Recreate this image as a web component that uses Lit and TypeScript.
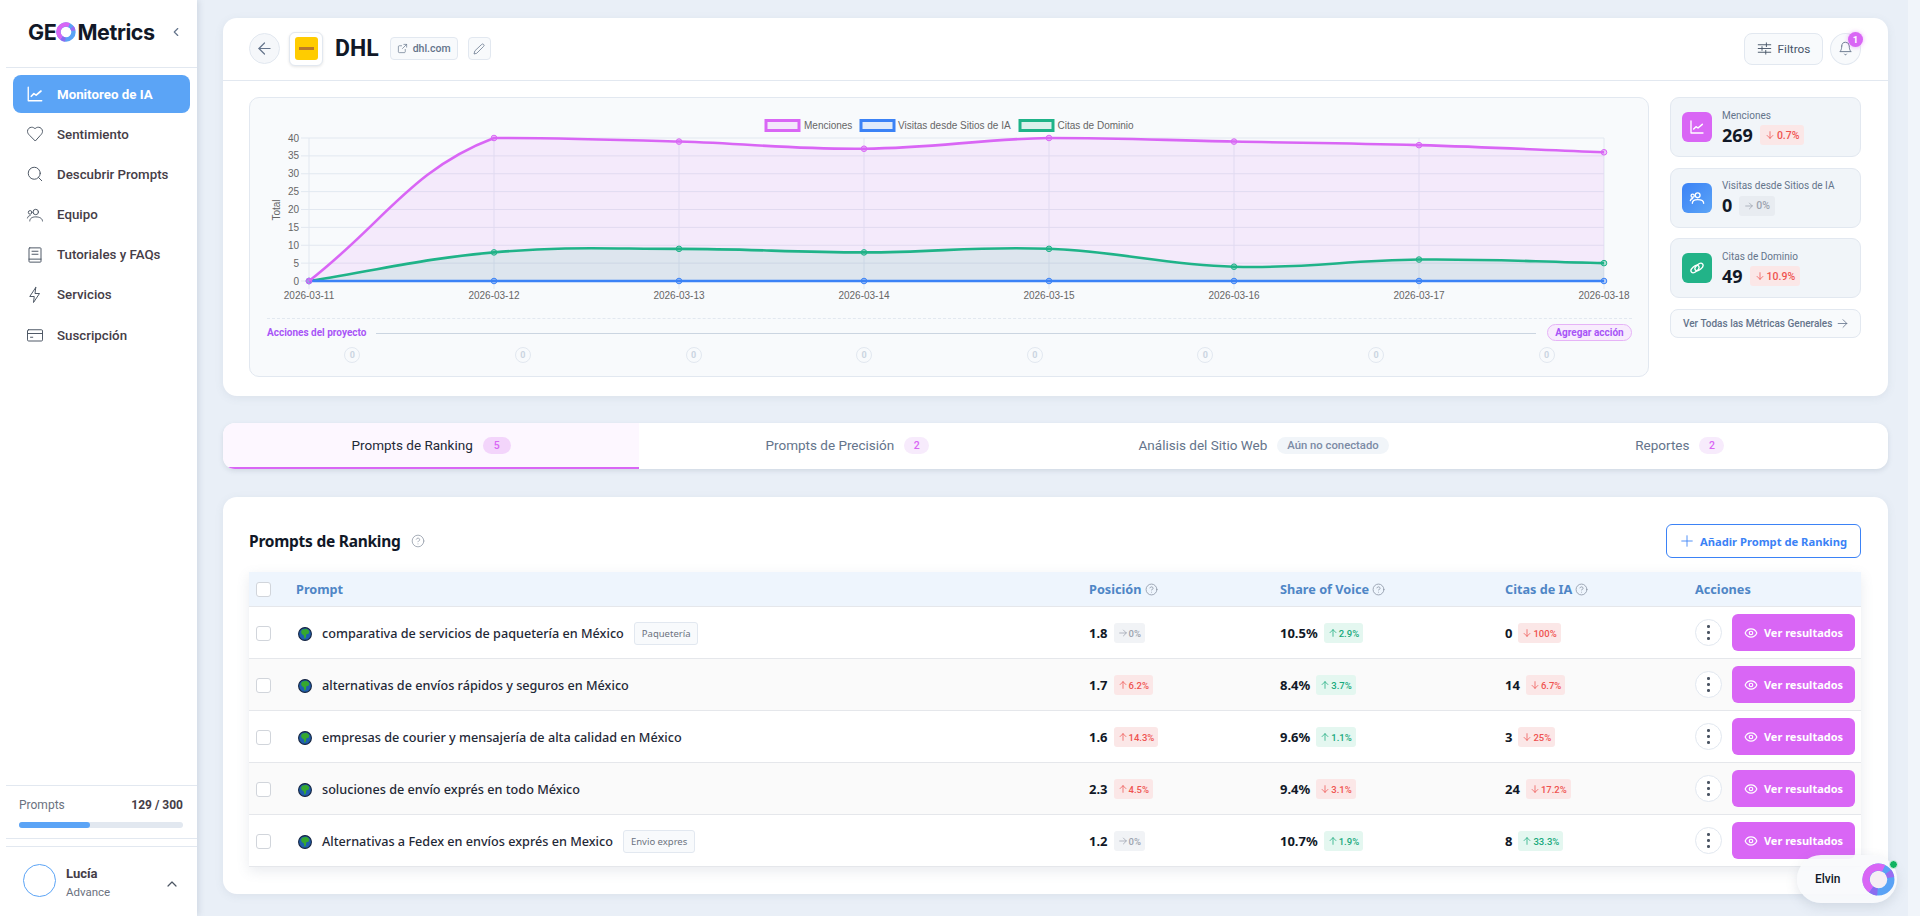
import { LitElement, html, css, svg } from "lit";
import { customElement } from "lit/decorators.js";

const ic = (body: any, size = 16, sw = 1.5) => html`<svg class="ic" width=${size} height=${size} viewBox="0 0 24 24" fill="none" stroke="currentColor" stroke-width=${sw} stroke-linecap="round" stroke-linejoin="round">${body}</svg>`;

const I = {
  chart: svg`<path d="M3 3v18h18"/><path d="M7 15l3.500-3.500 3 2L20 8" stroke-width="2.200"/>`,
  heart: svg`<path d="M19 14c1.490-1.460 3-3.210 3-5.500A5.500 5.500 0 0 0 16.500 3c-1.760 0-3 .5-4.500 2-1.500-1.500-2.740-2-4.500-2A5.500 5.500 0 0 0 2 8.500c0 2.300 1.500 4.050 3 5.500l7 7Z"/>`,
  search: svg`<circle cx="11" cy="11" r="8"/><path d="m21 21-4.300-4.300"/>`,
  users: svg`<circle cx="13" cy="8" r="3.600"/><path d="M5 20c0-3.500 3-5.500 8-5.500s9 2 9 5.500"/><circle cx="5.500" cy="8.500" r="2.400"/><path d="M2 16c.5-2 1.500-3 3.500-3.300"/>`,
  book: svg`<rect x="4" y="2.500" width="16" height="19" rx="1"/><path d="M8 7h8M8 11h8M4 17.500h16"/>`,
  zap: svg`<path d="M13 2 5 14h6l-1 8 8-12h-6l1-8z"/>`,
  card: svg`<rect x="2" y="5" width="20" height="15" rx="1.500"/><path d="M2 10h20M6 15h3"/>`,
  back: svg`<path d="m12 19-7-7 7-7"/><path d="M19 12H5"/>`,
  ext: svg`<path d="M15 3h6v6"/><path d="M12 12 21 3"/><path d="M18 14v5a2 2 0 0 1-2 2H5a2 2 0 0 1-2-2V8a2 2 0 0 1 2-2h5"/>`,
  pencil: svg`<path d="M17 3a2.850 2.830 0 1 1 4 4L7.500 20.500 2 22l1.500-5.500Z"/>`,
  sliders: svg`<path d="M2 6h20M2 12h20M2 18h20"/><path d="M15 3v6M8 9v6M14 15v6"/>`,
  bell: svg`<path d="M6 8a6 6 0 0 1 12 0c0 7 3 9 3 9H3s3-2 3-9"/><path d="M10.300 21a1.940 1.940 0 0 0 3.400 0"/>`,
  help: svg`<circle cx="12" cy="12" r="10"/><path d="M9.090 9a3 3 0 0 1 5.830 1c0 2-3 3-3 3"/><path d="M12 17h.01"/>`,
  eye: svg`<path d="M2 12s3-7 10-7 10 7 10 7-3 7-10 7-10-7-10-7Z"/><circle cx="12" cy="12" r="3"/>`,
  plus: svg`<path d="M12 3v18M3 12h18"/>`,
  right: svg`<path d="M4 12h16"/><path d="m13 5 7 7-7 7"/>`,
  up: svg`<path d="M12 20V4"/><path d="m5 11 7-7 7 7"/>`,
  down: svg`<path d="M12 4v16"/><path d="m5 13 7 7 7-7"/>`,
  link: svg`<ellipse cx="9" cy="13.500" rx="7" ry="4" transform="rotate(-40 9 13.500)"/><ellipse cx="15" cy="10.500" rx="7" ry="4" transform="rotate(-40 15 10.500)"/>`,
};

type Kind = "up" | "down" | "flat";
interface Tr { k: Kind; c: "red" | "green" | "gray"; t: string; }
const T = (k: Kind, c: Tr["c"], t: string): Tr => ({ k, c, t });

const ROWS = [
  { p: "comparativa de servicios de paquetería en México", tag: "Paquetería", pos: "1.8", pt: T("flat", "gray", "0%"), sov: "10.5%", st: T("up", "green", "2.9%"), cit: "0", ct: T("down", "red", "100%") },
  { p: "alternativas de envíos rápidos y seguros en México", tag: "", pos: "1.7", pt: T("up", "red", "6.2%"), sov: "8.4%", st: T("up", "green", "3.7%"), cit: "14", ct: T("down", "red", "6.7%") },
  { p: "empresas de courier y mensajería de alta calidad en México", tag: "", pos: "1.6", pt: T("up", "red", "14.3%"), sov: "9.6%", st: T("up", "green", "1.1%"), cit: "3", ct: T("down", "red", "25%") },
  { p: "soluciones de envío exprés en todo México", tag: "", pos: "2.3", pt: T("up", "red", "4.5%"), sov: "9.4%", st: T("down", "red", "3.1%"), cit: "24", ct: T("down", "red", "17.2%") },
  { p: "Alternativas a Fedex en envíos exprés en Mexico", tag: "Envio expres", pos: "1.2", pt: T("flat", "gray", "0%"), sov: "10.7%", st: T("up", "green", "1.9%"), cit: "8", ct: T("up", "green", "33.3%") },
];

const NAV: [string, any, number][] = [
  ["Monitoreo de IA", I.chart, 18], ["Sentimiento", I.heart, 18], ["Descubrir Prompts", I.search, 18], ["Equipo", I.users, 18],
  ["Tutoriales y FAQs", I.book, 18], ["Servicios", I.zap, 18], ["Suscripción", I.card, 18],
];

const DATES = ["2026-03-11", "2026-03-12", "2026-03-13", "2026-03-14", "2026-03-15", "2026-03-16", "2026-03-17", "2026-03-18"];
const X0 = 59, X1 = 1354, Y40 = 40, Y0 = 183;
const px = (i: number) => X0 + (i * (X1 - X0)) / 7;
const py = (v: number) => Y0 - (v * (Y0 - Y40)) / 40;

function spline(vals: number[]) {
  const pts = vals.map((v, i) => ({ x: px(i), y: py(v) }));
  const t = 0.4;
  const clampY = (y: number) => Math.max(Y40, Math.min(Y0, y));
  const ctrl = pts.map((p, i) => {
    const a = pts[i - 1] ?? p, b = pts[i + 1] ?? p;
    const d1 = Math.hypot(p.x - a.x, p.y - a.y), d2 = Math.hypot(b.x - p.x, b.y - p.y);
    const s = d1 + d2 || 1;
    return {
      px: p.x - (t * d1 / s) * (b.x - a.x), py: clampY(p.y - (t * d1 / s) * (b.y - a.y)),
      nx: p.x + (t * d2 / s) * (b.x - a.x), ny: clampY(p.y + (t * d2 / s) * (b.y - a.y)),
    };
  });
  let d = `M${pts[0].x} ${pts[0].y}`;
  for (let i = 1; i < pts.length; i++) {
    d += `C${ctrl[i - 1].nx} ${ctrl[i - 1].ny} ${ctrl[i].px} ${ctrl[i].py} ${pts[i].x} ${pts[i].y}`;
  }
  return { d, pts };
}

const SERIES = [
  { c: "#1fb388", f: "rgba(16,185,129,.1)", v: [0, 8, 9, 8, 9, 4, 6, 5] },
  { c: "#3b82f6", f: "rgba(59,130,246,.1)", v: [0, 0, 0, 0, 0, 0, 0, 0] },
  { c: "#d966f5", f: "rgba(217,102,245,.1)", v: [0, 40, 39, 37, 40, 39, 38, 36] },
];

function chart() {
  const grid = [0, 1, 2, 3, 4, 5, 6, 7, 8];
  return html`<svg class="chart" width="1398" height="215" viewBox="0 0 1398 215">
    ${grid.map((g) => { const y = py(g * 5); return svg`<line x1="51" x2=${X1} y1=${y} y2=${y} stroke="#e2e8f0"/>
      <text x="49" y=${y + 3.500} text-anchor="end" class="tk">${g * 5}</text>`; })}
    ${DATES.map((d, i) => svg`<line x1=${px(i)} x2=${px(i)} y1=${Y40} y2=${Y0 + 8} stroke="#e2e8f0"/>
      <text x=${px(i)} y="201" text-anchor="middle" class="tk">${d}</text>`)}
    <text class="tk" text-anchor="middle" transform="translate(30 112) rotate(-90)">Total</text>
    ${[...SERIES].reverse().map((s) => { const { d } = spline(s.v); return svg`<path d=${`${d}L${X1} ${Y0}L${X0} ${Y0}Z`} fill=${s.f}/>`; })}
    ${SERIES.map((s) => {
      const { d, pts } = spline(s.v);
      return svg`<path d=${d} fill="none" stroke=${s.c} stroke-width="2.600"/>
        ${pts.map((p) => svg`<circle cx=${p.x} cy=${p.y} r="2.800" fill=${s.c} fill-opacity=".35" stroke=${s.c}/>`)}`;
    })}
    <g>
      <rect x="516" y="22.500" width="33" height="10" fill="rgba(217,102,245,.12)" stroke="#d966f5" stroke-width="3"/>
      <text x="554" y="31" class="tk">Menciones</text>
      <rect x="611" y="22.500" width="33" height="10" fill="rgba(59,130,246,.12)" stroke="#3b82f6" stroke-width="3"/>
      <text x="648" y="31" class="tk">Visitas desde Sitios de IA</text>
      <rect x="770" y="22.500" width="33" height="10" fill="rgba(16,185,129,.12)" stroke="#1fb388" stroke-width="3"/>
      <text x="807.500" y="31" class="tk">Citas de Dominio</text>
    </g>
  </svg>`;
}

const ring = (size: number, core = "none") => html`<svg width=${size} height=${size} viewBox="0 0 32 32" fill="none" stroke-width="7">
  <circle cx="16" cy="16" r="9" fill=${core} stroke="none"/>
  <circle cx="16" cy="16" r="12" stroke="#5aa2f5"/>
  <path d="M9 25.800A12 12 0 0 1 21 5.100" stroke="#d966f5"/>
  <path d="M25.500 8.600A12 12 0 0 1 27.800 14" stroke="#9a6cf2"/>
  <path d="M9 25.800A12 12 0 0 0 15 28" stroke="#8b6cf0"/>
</svg>`;

const globe = html`<svg class="globe" width="14" height="14" viewBox="0 0 14 14">
  <circle cx="7" cy="7" r="6.400" fill="#1f5fae" stroke="#14233f" stroke-width="1.100"/>
  <path d="M4 2.800 8.500 1.800 11.300 4 10.600 6.800 8.300 7.200 8 10.300 6.500 12 5.900 8.500 3.800 7 3 5Z" fill="#35a82f"/>
</svg>`;

const trend = (t: Tr) => html`<span class="trend ${t.c}">${ic(t.k === "up" ? I.up : t.k === "down" ? I.down : I.right, 10, 1.800)}${t.t}</span>`;

@customElement("app-root")
export class AppRoot extends LitElement {
  static styles = css`
    :host { display: block; position: relative; width: 1920px; height: 916px; overflow: hidden; font-family: "Noto Sans", sans-serif; color: #111827; background: #e9eff7; }
    * { box-sizing: border-box; }
    .ic { display: block; flex: none; }
    .page { display: flex; height: 916px; }

    .side { width: 197px; flex: none; background: #fff; box-shadow: 2px 0 6px rgba(100,116,139,.18); display: flex; flex-direction: column; font-family: Roboto, sans-serif; position: relative; }
    .brand { height: 68px; margin-left: 6px; padding: 0 14px 4px 22px; display: flex; align-items: center; justify-content: space-between; border-bottom: 1px solid #e2e8f0; }
    .logo { display: flex; align-items: center; font: 700 21.500px Inter, sans-serif; letter-spacing: -.4px; color: #111827; }
    .logo svg { margin: 0 1px 0 0; }
    .chev { color: #64748b; }
    .nav { padding: 7px 7px 0 13px; display: flex; flex-direction: column; gap: 2.200px; }
    .nav a { height: 38px; border-radius: 8px; display: flex; align-items: center; gap: 13px; padding-left: 13px; font-size: 13.300px; font-weight: 500; color: #453d47; }
    .nav a .ic { stroke-width: 1.300; color: #4b5563; }
    .nav a.on { background: #5ba4f6; color: #fff; font-weight: 700; }
    .nav a.on .ic { color: #fff; stroke-width: 1.800; }
    .usage { margin: auto 0 0 6px; border-top: 1px solid #e2e8f0; border-bottom: 1px solid #e2e8f0; height: 54px; padding: 12px 14px 0 13px; }
    .usage .l { display: flex; justify-content: space-between; font-size: 12px; color: #6b7280; line-height: 15px; }
    .usage b { color: #453d47; font-weight: 700; font-size: 12px; }
    .bar { height: 6px; margin-top: 9px; background: #e2e8f0; border-radius: 3px; }
    .bar i { display: block; height: 6px; width: 43%; background: #5ba4f6; border-radius: 3px; }
    .user { margin: 7px 0 0 6px; border-top: 1px solid #e2e8f0; height: 70px; display: flex; align-items: center; padding: 0 17px 2px 17px; gap: 10px; }
    .av { width: 33px; height: 33px; border: 1px solid #5ba4f6; border-radius: 50%; }
    .un { flex: 1; margin-top: 5px; }
    .un b { display: block; font-size: 13px; font-weight: 700; color: #453d47; line-height: 17px; }
    .un span { display: block; font-size: 11.500px; color: #6b7280; line-height: 17px; margin-top: 2px; }
    .user > .ic { margin-top: 6px; color: #4b5563; }

    .main { flex: 1; padding: 18px 20px 0 26px; display: flex; flex-direction: column; }
    .sb { width: 12px; flex: none; background: #f1f5fa; }
    .card { background: #fff; border-radius: 14px; box-shadow: 0 2px 8px rgba(100,116,139,.1); }

    .head { height: 63px; border-bottom: 1px solid #e2e8f0; padding: 0 27px 1px 26px; display: flex; align-items: center; }
    .round { width: 31px; height: 31px; border-radius: 50%; border: 1px solid #e2e8f0; background: #f5f7fa; color: #64748b; display: flex; align-items: center; justify-content: center; flex: none; }
    .lg { width: 34px; height: 34px; margin-left: 9px; border: 1px solid #e2e8f0; border-radius: 6px; background: #fff; box-shadow: 0 1px 3px rgba(0,0,0,.1); display: flex; align-items: center; justify-content: center; }
    .lg i { width: 23px; height: 23px; border-radius: 3px; background: #ffcc00; display: flex; align-items: center; justify-content: center; }
    .lg i::after { content: ""; width: 15px; height: 2.500px; background: #b9782a; }
    h1 { margin: 0 0 0 12px; font: 700 23px Roboto, sans-serif; color: #111827; }
    .site { margin-left: 11px; height: 23px; width: 68px; border: 1px solid #e2e8f0; border-radius: 4px; background: #f8fafc; display: flex; align-items: center; justify-content: center; gap: 5px; font: 500 10.500px Roboto, sans-serif; color: #64748b; }
    .edit { margin-left: 10px; width: 23px; height: 23px; border: 1px solid #e2e8f0; border-radius: 4px; background: #f8fafc; color: #64748b; display: flex; align-items: center; justify-content: center; }
    .grow { flex: 1; }
    .filt { width: 79px; height: 32px; border: 1px solid #e2e8f0; border-radius: 8px; background: #f8fafc; color: #475569; display: flex; align-items: center; justify-content: center; gap: 6px; font: 400 11.800px Roboto, sans-serif; }
    .bell { margin-left: 7px; position: relative; width: 31px; height: 32px; background: #f8fafc; }
    .dot { position: absolute; right: -3px; top: -2px; width: 15px; height: 15px; border-radius: 50%; background: #d966f5; color: #fff; font: 700 9.500px/15px Roboto, sans-serif; text-align: center; box-shadow: 0 0 4px rgba(217,102,245,.5); }
    .body { display: flex; gap: 21px; padding: 16px 27px 19px 26px; }

    .panel { width: 1400px; height: 280px; flex: none; background: #f8fafc; border: 1px solid #e2e8f0; border-radius: 10px; }
    .chart { display: block; }
    .chart .tk, .chart text { font: 10px "Liberation Sans", sans-serif; fill: #666; }
    .acts { margin: 5px 16px 0 17px; border-top: 1px dashed #e2e8f0; padding-top: 5px; }
    .ar { display: flex; align-items: center; height: 17px; font: 700 10px Roboto, sans-serif; color: #a855f7; }
    .ar u { flex: 1; height: 1px; background: #cbd5e1; margin: 1px 11px 0 10px; }
    .add { width: 85px; height: 17px; border: 1px solid #e6b3f7; border-radius: 9px; background: #f8ecfd; text-align: center; line-height: 15px; }
    .zs { display: grid; grid-template-columns: repeat(8, 1fr); margin-top: 6px; justify-items: center; }
    .zs span { width: 16px; height: 16px; border-radius: 50%; border: 1px solid #e2e8f0; font: 700 9px/14px Roboto, sans-serif; text-align: center; color: #cbd5e1; }

    .stats { width: 191px; flex: none; display: flex; flex-direction: column; gap: 10.500px; }
    .stat { height: 60px; border: 1px solid #e2e8f0; border-radius: 9px; background: #f1f5f9; display: flex; align-items: center; gap: 10px; padding: 0 0 0 11px; }
    .si { width: 30px; height: 30px; border-radius: 6px; color: #fff; display: flex; align-items: center; justify-content: center; flex: none; }
    .si .ic { stroke-width: 2; }
    .si.p { background: #d966f5; } .si.b { background: linear-gradient(135deg,#3b82f6,#5ba4f6); } .si.g { background: #22b388; }
    .st { min-width: 0; }
    .st small { display: block; font: 400 10px/13px Roboto, sans-serif; color: #64748b; white-space: nowrap; }
    .sv { display: flex; align-items: center; gap: 7px; margin-top: 3px; }
    .sv b { font: 700 18px/21px "Noto Sans", sans-serif; color: #111827; }
    .trend { display: inline-flex; align-items: center; gap: 1px; height: 20px; padding: 0 4px; border-radius: 3px; font: 500 9.500px Roboto, sans-serif; white-space: nowrap; }
    .stats .trend { padding: 0 5px; font-size: 10.500px; font-weight: 500; gap: 2px; }
    .stats .gray { background: #e8ecf1; }
    .red { background: #fbe7e7; color: #ef5350; } .green { background: #e4f7f0; color: #17a97c; } .gray { background: #f1f3f6; color: #9ca3af; }
    .all { height: 29px; border: 1px solid #e2e8f0; border-radius: 8px; background: #f8fafc; padding: 0 11px 0 12px; display: flex; align-items: center; justify-content: space-between; font: 500 10px Roboto, sans-serif; color: #64748b; }

    .tabs { height: 46px; margin-top: 27px; display: grid; grid-template-columns: repeat(4, 1fr); overflow: hidden; box-shadow: 0 2px 5px rgba(100,116,139,.18); border-radius: 12px; font: 400 13.500px Roboto, sans-serif; color: #64748b; }
    .tab { display: flex; align-items: center; justify-content: center; gap: 10px; padding-bottom: 2px; }
    .tab.on { background: #fdf7ff; border-bottom: 2px solid #d966f5; color: #1f2937; padding-bottom: 0; }
    .pill { height: 17px; min-width: 25px; padding: 0 6px; border-radius: 9px; background: #f7ebfc; color: #d966f5; font: 500 10.500px/17px Roboto, sans-serif; text-align: center; }
    .on .pill { background: #f3d5fb; width: 28px; }
    .pill.n { background: #f1f5f9; color: #7c8ba5; padding: 0 10px; font-size: 11.300px; }

    .tc { height: 397px; margin-top: 28px; padding: 27px 27px 0 26px; }
    .th { height: 48px; display: flex; align-items: flex-start; }
    h2 { margin: 8px 0 0; font: 700 15.500px/18px "Noto Sans", sans-serif; letter-spacing: -.25px; color: #111827; }
    .hp { color: #9ca3af; margin: 10px 0 0 10px; }
    .addb { margin-left: auto; width: 195px; height: 34px; border: 1px solid #3b82f6; border-radius: 6px; color: #3b82f6; display: flex; align-items: center; justify-content: center; gap: 6px; font: 700 11.200px "Noto Sans", sans-serif; }
    .tb { box-shadow: 0 4px 12px rgba(100,116,139,.14); }
    .r { display: grid; grid-template-columns: 47px 793px 191px 225px 190px 166px; height: 52px; padding-top: 1px; border-bottom: 1px solid #e5e7eb; align-items: center; font-size: 12.650px; }
    .r.h { height: 35px; padding-top: 0; background: #eef5fd; font-weight: 700; font-size: 12.700px; color: #4f86c6; }
    .r:nth-child(odd):not(.h) { background: #fafafa; }
    .ck { width: 15px; height: 15px; margin-left: 7px; border: 1px solid #d1d5db; border-radius: 3px; background: #fff; }
    .hc { display: flex; align-items: center; gap: 3px; }
    .hc .ic { color: #8b95a5; }
    .pc { display: flex; align-items: center; }
    .globe { margin: 1px 10px 0 2px; flex: none; }
    .pt { color: #1f2937; font-weight: 500; }
    .tag { margin-left: 10px; height: 23px; padding: 0 7px; border: 1px solid #e2e8f0; border-radius: 3px; background: #f8fafc; color: #6b7280; font-size: 9.500px; line-height: 21px; }
    .vc { display: flex; align-items: center; gap: 6px; }
    .vc > b { font-size: 13px; font-weight: 700; color: #111827; }
    .ac { display: flex; align-items: center; gap: 10px; margin-top: -1px; }
    .more { width: 27px; height: 27px; border-radius: 50%; border: 1px solid #e2e8f0; background: #fff; display: flex; flex-direction: column; align-items: center; justify-content: center; gap: 3.500px; }
    .more i { width: 2.500px; height: 2.500px; border-radius: 50%; background: #4b5563; }
    .vr { width: 123px; height: 37px; border-radius: 6px; background: #d966f5; color: #fff; font-weight: 700; font-size: 11px; display: flex; align-items: center; justify-content: center; gap: 6px; }
    .vr .ic { stroke-width: 2; }

    .elvin { position: absolute; left: 1797px; top: 855px; width: 100px; height: 48px; border-radius: 24px; background: rgba(248,250,252,.92); box-shadow: 0 4px 12px rgba(100,116,139,.18); display: flex; align-items: center; padding: 0 0 0 18px; gap: 21px; font: 500 12px Roboto, sans-serif; color: #111827; }
    .elvin .rw { position: relative; }
    .elvin svg { display: block; }
    .elvin em { position: absolute; right: -3px; top: -3px; width: 9px; height: 9px; border-radius: 50%; background: #10b360; border: 1px solid #dff5ea; }
  `;

  render() {
    return html`<div class="page">
      <aside class="side">
        <div class="brand">
          <div class="logo">GE${ring(20)}Metrics</div>
          <div class="chev">${ic(svg`<path d="m15 18-6-6 6-6"/>`, 14, 2)}</div>
        </div>
        <nav class="nav">
          ${NAV.map(([n, i, s], k) => html`<a class=${k === 0 ? "on" : ""}>${ic(i, s)}${n}</a>`)}
        </nav>
        <div class="usage">
          <div class="l"><span>Prompts</span><b>129 / 300</b></div>
          <div class="bar"><i></i></div>
        </div>
        <div class="user">
          <div class="av"></div>
          <div class="un"><b>Lucía</b><span>Advance</span></div>
          ${ic(svg`<path d="m18 15-6-6-6 6"/>`, 16, 1.800)}
        </div>
      </aside>

      <main class="main">
        <section class="card">
          <div class="head">
            <div class="round">${ic(I.back, 19)}</div>
            <div class="lg"><i></i></div>
            <h1>DHL</h1>
            <div class="site">${ic(I.ext, 11)}dhl.com</div>
            <div class="edit">${ic(I.pencil, 12)}</div>
            <div class="grow"></div>
            <div class="filt">${ic(I.sliders, 15)}Filtros</div>
            <div class="round bell">${ic(I.bell, 15)}<span class="dot">1</span></div>
          </div>
          <div class="body">
            <div class="panel">
              ${chart()}
              <div class="acts">
                <div class="ar"><span>Acciones del proyecto</span><u></u><span class="add">Agregar acción</span></div>
                <div class="zs">${DATES.map(() => html`<span>0</span>`)}</div>
              </div>
            </div>
            <div class="stats">
              ${this.stat("p", I.chart, "Menciones", "269", T("down", "red", "0.7%"))}
              ${this.stat("b", I.users, "Visitas desde Sitios de IA", "0", T("flat", "gray", "0%"))}
              ${this.stat("g", I.link, "Citas de Dominio", "49", T("down", "red", "10.9%"))}
              <div class="all">Ver Todas las Métricas Generales ${ic(I.right, 13)}</div>
            </div>
          </div>
        </section>

        <section class="card tabs">
          <div class="tab on">Prompts de Ranking <span class="pill">5</span></div>
          <div class="tab">Prompts de Precisión <span class="pill">2</span></div>
          <div class="tab">Análisis del Sitio Web <span class="pill n">Aún no conectado</span></div>
          <div class="tab">Reportes <span class="pill">2</span></div>
        </section>

        <section class="card tc">
          <div class="th">
            <h2>Prompts de Ranking</h2>
            <span class="hp">${ic(I.help, 14)}</span>
            <div class="addb">${ic(I.plus, 14)}Añadir Prompt de Ranking</div>
          </div>
          <div class="tb">
            <div class="r h">
              <div><div class="ck"></div></div>
              <div>Prompt</div>
              <div class="hc">Posición ${ic(I.help, 13)}</div>
              <div class="hc">Share of Voice ${ic(I.help, 13)}</div>
              <div class="hc">Citas de IA ${ic(I.help, 13)}</div>
              <div>Acciones</div>
            </div>
            ${ROWS.map((r) => html`<div class="r">
              <div><div class="ck"></div></div>
              <div class="pc">${globe}<span class="pt">${r.p}</span>${r.tag ? html`<span class="tag">${r.tag}</span>` : ""}</div>
              <div class="vc"><b>${r.pos}</b>${trend(r.pt)}</div>
              <div class="vc"><b>${r.sov}</b>${trend(r.st)}</div>
              <div class="vc"><b>${r.cit}</b>${trend(r.ct)}</div>
              <div class="ac"><div class="more"><i></i><i></i><i></i></div><div class="vr">${ic(I.eye, 14)}Ver resultados</div></div>
            </div>`)}
          </div>
        </section>
      </main>
      <div class="sb"></div>
    </div>
    <div class="elvin">Elvin<span class="rw">${ring(33, "#f6eef4")}<em></em></span></div>`;
  }

  stat(c: string, icon: any, label: string, val: string, t: Tr) {
    return html`<div class="stat">
      <div class="si ${c}">${ic(icon, 16)}</div>
      <div class="st"><small>${label}</small><div class="sv"><b>${val}</b>${trend(t)}</div></div>
    </div>`;
  }
}
